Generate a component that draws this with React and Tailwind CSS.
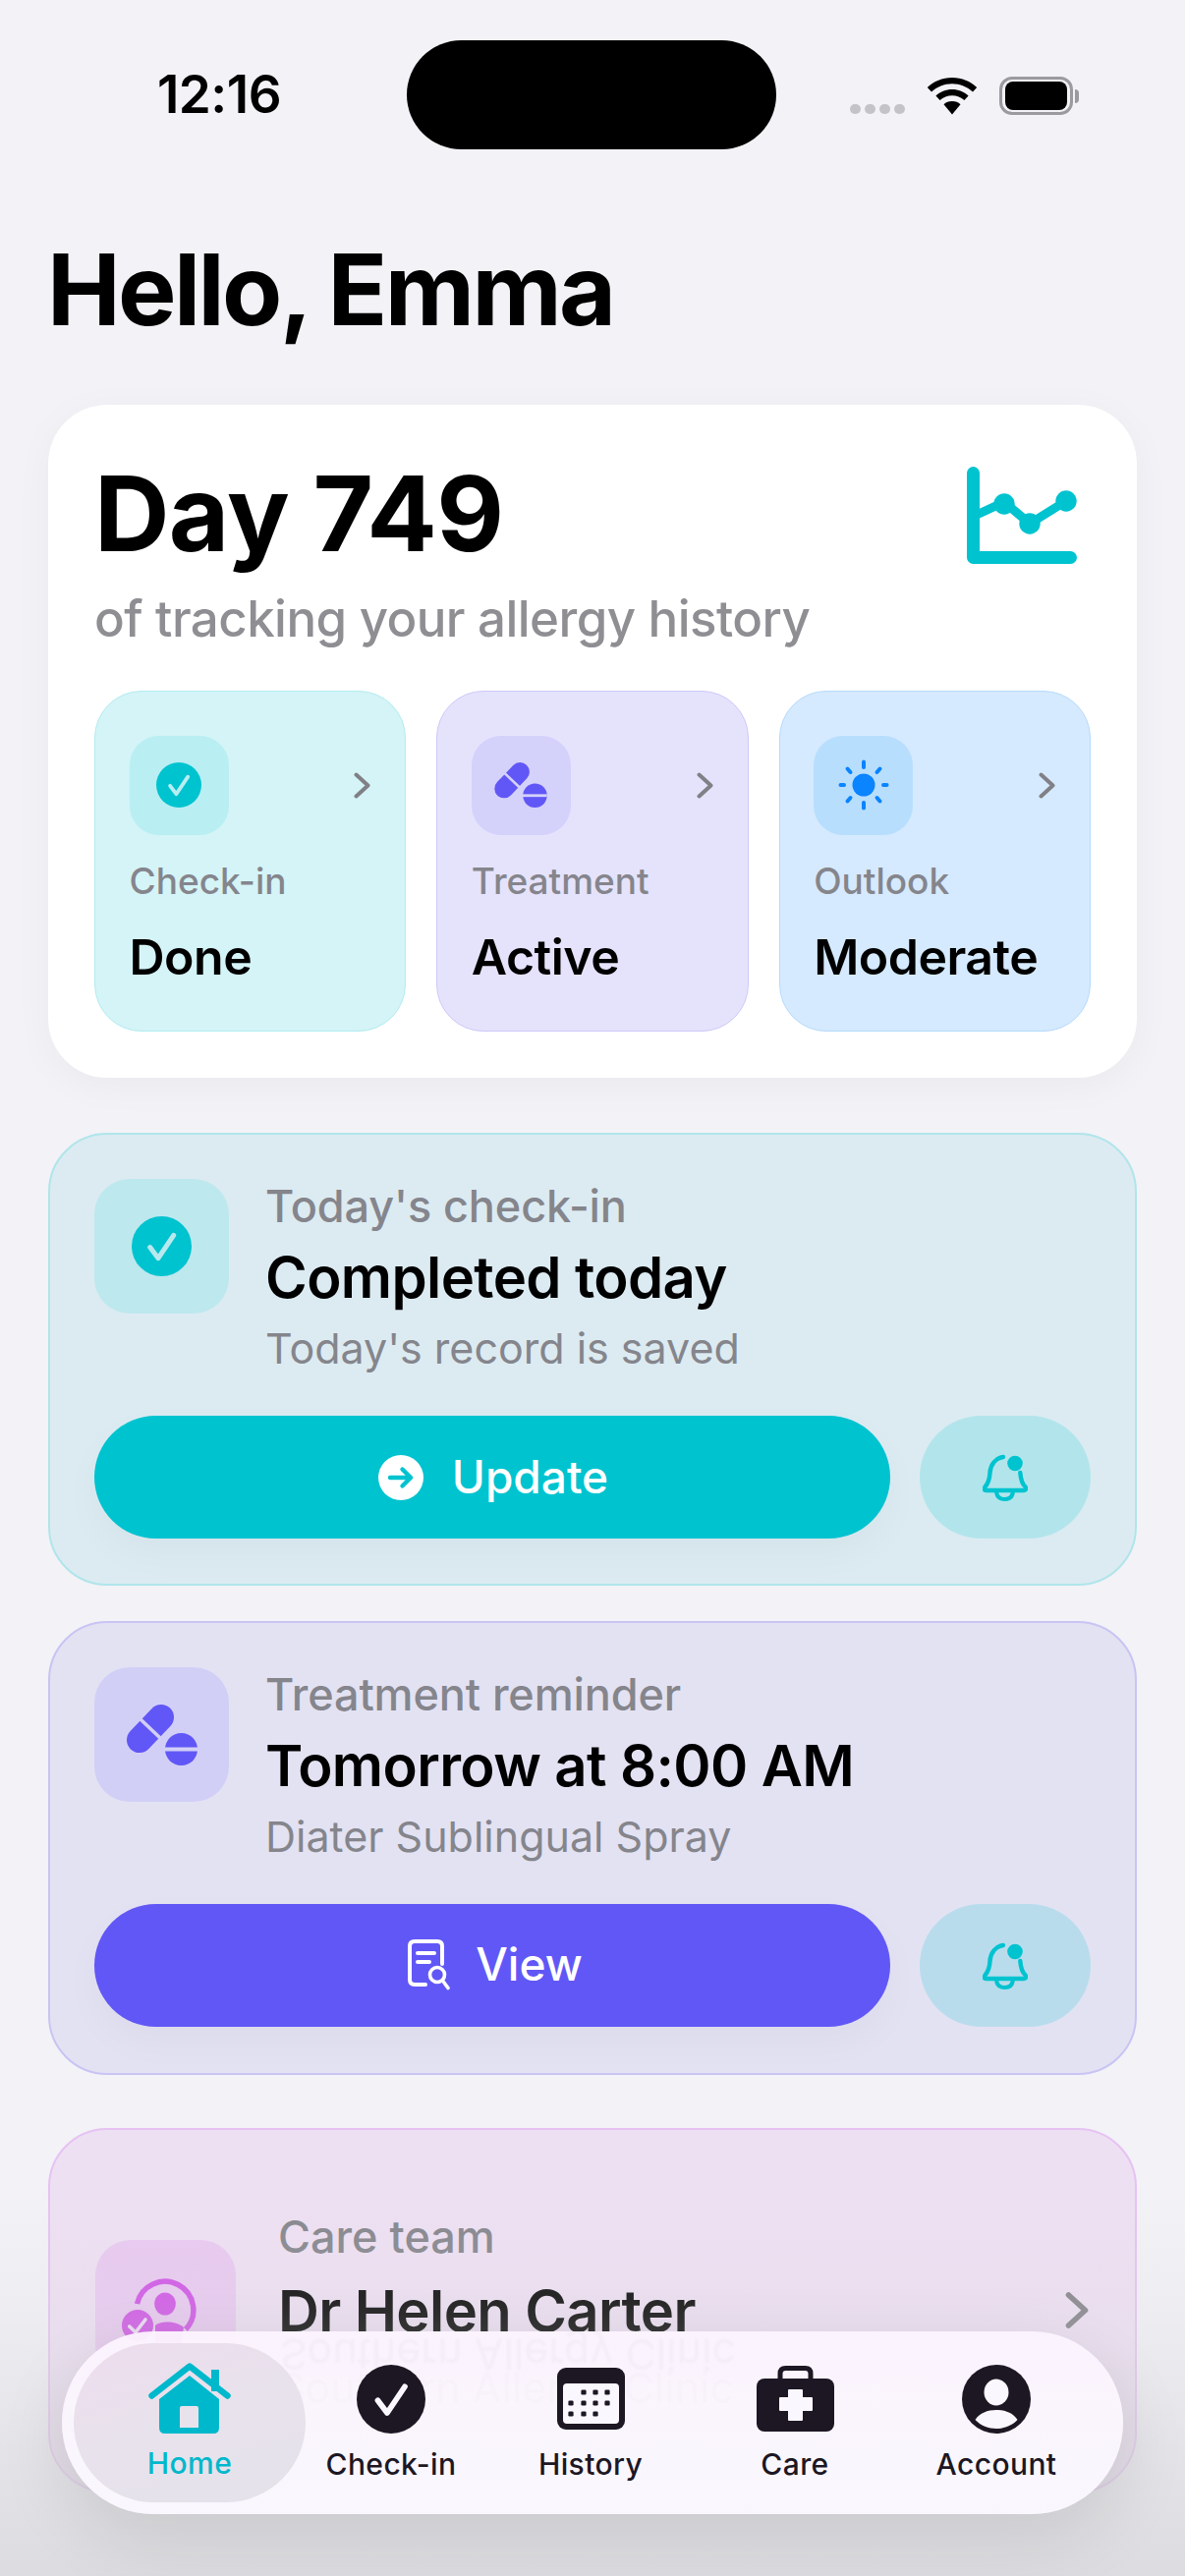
import React from "react";

const Check = ({ size = 44, bg = "#00c3d0", fg = "#b8e9ee" }) => (
  <svg width={size} height={size} viewBox="0 0 44 44">
    <circle cx="22" cy="22" r="22" fill={bg} />
    <path d="M13.500 22.800 L19.500 30.800 L30.800 14" fill="none" stroke={fg} strokeWidth="3.600" strokeLinecap="round" strokeLinejoin="round" />
  </svg>
);

const Pills = ({ w = 72, h = 62, cut = "#d2cff6" }) => (
  <svg width={w} height={h} viewBox="0 0 72 62">
    <path d="M35 13 L13 36" fill="none" stroke="#6157f6" strokeWidth="26" strokeLinecap="round" />
    <path d="M4 5.500 L44 43.500" fill="none" stroke={cut} strokeWidth="3.600" />
    <circle cx="55.500" cy="45.500" r="16.500" fill="#6157f6" />
    <path d="M38 45.500 H72" stroke={cut} strokeWidth="3.800" />
  </svg>
);

const Sun = () => (
  <svg width="52" height="52" viewBox="0 0 52 52">
    <circle cx="26" cy="26" r="11.500" fill="#0a84ff" />
    <g stroke="#0a84ff" strokeWidth="4" strokeLinecap="round">
      <path d="M26 2.500V8" />
      <path d="M26 44V49.500" />
      <path d="M2.500 26H6" />
      <path d="M46 26H49.500" />
      <path d="M9.500 9.500L12.500 13" />
      <path d="M42.500 9.500L39.500 13" />
      <path d="M9.500 42.500L12.500 39" />
      <path d="M42.500 42.500L39.500 39" />
    </g>
  </svg>
);

const Chevron = ({ w = 17, h = 27, c = "#808086" }) => (
  <svg width={w} height={h} viewBox="0 0 17 27">
    <path d="M2.500 2.500 L14.500 13.500 L2.500 24.500" fill="none" stroke={c} strokeWidth="4" strokeLinecap="round" strokeLinejoin="round" />
  </svg>
);

const Bell = () => (
  <svg width="46" height="48" viewBox="0 0 46 48" fill="none">
    <path d="M21 3 C13 4 8 11 7.500 19 C7.200 25 6.500 29 2.500 33.500 C1 35.600 1.600 37 3.500 37 H42 C44 37 45 35.500 43.600 33.500 C39.800 30 38.800 26 38.300 19" stroke="#00c3d0" strokeWidth="4.400" strokeLinecap="round" />
    <path d="M14 38 C14.500 43.500 18 46 22.500 46 C27 46 30.500 43.500 31 38" stroke="#00c3d0" strokeWidth="4" />
    <circle cx="33" cy="9.500" r="7.800" fill="#00c3d0" />
  </svg>
);

const ArrowCircle = () => (
  <svg width="46" height="46" viewBox="0 0 46 46">
    <circle cx="23" cy="23" r="23" fill="#fff" />
    <path d="M12 23H33M24.500 14.500L33 23L24.500 31.500" fill="none" stroke="#00c3d0" strokeWidth="4.400" strokeLinecap="round" strokeLinejoin="round" />
  </svg>
);

const DocSearch = () => (
  <svg width="44" height="52" viewBox="0 0 44 52" fill="none">
    <path d="M18 46 H7 C3.500 46 2 44.500 2 41 V7 C2 3.500 3.500 2 7 2 H30 C33.500 2 35 3.500 35 7 V25" stroke="#fff" strokeWidth="4" strokeLinecap="round" />
    <path d="M10 14H27M10 23H22" stroke="#fff" strokeWidth="4" strokeLinecap="round" />
    <circle cx="30" cy="36" r="7.500" stroke="#fff" strokeWidth="3.600" />
    <path d="M35.500 42L41 49.500" stroke="#fff" strokeWidth="3.600" strokeLinecap="round" />
  </svg>
);

const ChartIcon = () => (
  <svg width="112" height="99" viewBox="0 0 112 99" fill="none">
    <path d="M10 49L38 36L64 58L101 35" stroke="#00c3d0" strokeWidth="9" />
    <path d="M6.500 6.500V92.500H105.500" stroke="#00c3d0" strokeWidth="13" strokeLinecap="round" strokeLinejoin="round" />
    <circle cx="38" cy="38" r="10.700" fill="#00c3d0" />
    <circle cx="64" cy="58" r="10.700" fill="#00c3d0" />
    <circle cx="101" cy="35" r="10.700" fill="#00c3d0" />
  </svg>
);

const CareIcon = () => (
  <svg width="89" height="70" viewBox="0 0 89 70" fill="none">
    <path d="M15.500 28 A29 29 0 1 1 65 54" stroke="#d051e6" strokeWidth="5.500" />
    <ellipse cx="44" cy="28" rx="10.800" ry="11.500" fill="#d051e6" />
    <path d="M34 50 C38 46 54 44 63 52 L60 70 L34 70Z" fill="#d051e6" />
    <circle cx="16" cy="50" r="18" fill="#e6c9ed" />
    <circle cx="16" cy="50" r="16" fill="#d051e6" />
    <path d="M7.700 51L14 57L24 44" stroke="#eedcf5" strokeWidth="3.600" strokeLinecap="round" strokeLinejoin="round" />
  </svg>
);

const HomeIcon = () => (
  <svg width="84" height="73" viewBox="112 39 84 73">
    <path d="M176 46h8v22h-8z" fill="#00b8cc" />
    <path d="M115.500 72.500 L154 42.500 L192.500 72.500" fill="none" stroke="#00b8cc" strokeWidth="6.500" strokeLinecap="round" strokeLinejoin="round" />
    <path fillRule="evenodd" d="M154 52 L184 76 V105 Q184 111 178 111 H129 Q123 111 123 105 V76 Z M146 83 Q144 83 144 85 V105 H163 V85 Q163 83 161 83 Z" fill="#00b8cc" />
  </svg>
);

const CalIcon = () => (
  <svg width="69" height="63" viewBox="0 0 69 63">
    <rect width="69" height="63" rx="9" fill="#1c1723" />
    <rect x="6" y="16" width="57" height="41" rx="4" fill="#fbf7fe" />
    <g fill="#1c1723">
      {[[27, 25], [39, 25], [51, 25], [14, 36], [27, 36], [39, 36], [51, 36], [14, 47], [27, 47], [39, 47]].map(([x, y]) => (
        <rect key={x + "-" + y} x={x - 2.600} y={y - 2.600} width="5.200" height="5.200" rx="1.300" />
      ))}
    </g>
  </svg>
);

const BagIcon = () => (
  <svg width="79" height="67" viewBox="0 0 79 67">
    <path d="M24 15V8C24 4.500 26 2.500 29.500 2.500H49.500C53 2.500 55 4.500 55 8V15" fill="none" stroke="#1c1723" strokeWidth="5" />
    <rect y="13" width="79" height="54" rx="8" fill="#1c1723" />
    <path d="M33 25H46V33H56V45H46V55H33V45H24V33H33Z" fill="#fbf7fe" stroke="#fbf7fe" strokeWidth="2" strokeLinejoin="round" />
  </svg>
);

const UserIcon = () => (
  <svg width="70" height="70" viewBox="0 0 70 70">
    <circle cx="35" cy="35" r="35" fill="#1c1723" />
    <ellipse cx="35" cy="28" rx="12.500" ry="13.500" fill="#fbf7fe" />
    <path d="M13.500 56 C18 49 26 46 35 46 C44 46 52 49 56.500 56 C51 62 43 65 35 65 C27 65 19 62 13.500 56Z" fill="#fbf7fe" />
  </svg>
);

const Tile = ({ bg, border, box, icon, label, value }) => (
  <div className={`flex h-[347px] flex-col rounded-[48px] border-[1.5px] pl-[34.5px] pr-[35px] pt-[44.5px] ${bg} ${border}`}>
    <div className="flex items-center justify-between">
      <div className={`flex size-[101px] items-center justify-center rounded-[30px] ${box}`}>{icon}</div>
      <Chevron />
    </div>
    <div className="mt-[25px] text-[37px] font-medium leading-[44px] text-[#85858c]">{label}</div>
    <div className="mt-[24px] whitespace-nowrap text-[50px] font-semibold leading-[62px] tracking-[-0.5px] text-black">{value}</div>
  </div>
);

const Row = ({ boxClass, icon, label, title, sub }) => (
  <div className="flex gap-[37px]">
    <div className={`flex size-[137px] shrink-0 items-center justify-center rounded-[36px] ${boxClass}`}>{icon}</div>
    <div className="flex flex-col">
      <div className="text-[45px] font-medium leading-[56px] tracking-[-0.1px] text-[#85858c]">{label}</div>
      <div className="mt-[8px] text-[58px] font-semibold leading-[72px] tracking-[-0.6px] text-black">{title}</div>
      <div className="mt-[8px] text-[43px] leading-[56px] text-[#85858c]">{sub}</div>
    </div>
  </div>
);

const NavItem = ({ w, icon, label, color = "text-[#1c1723]" }) => (
  <div className={`flex flex-col items-center ${w}`}>
    <div className="flex h-[72px] items-center">{icon}</div>
    <div className={`mt-[11px] text-[30px] font-medium leading-[38px] tracking-[0.4px] ${color}`}>{label}</div>
  </div>
);

export default function App() {
  return (
    <div className="relative h-[2622px] w-[1206px] overflow-hidden bg-[#f2f2f7] font-[Inter,sans-serif]">
      {/* status bar */}
      <div className="flex h-[152px] items-start pt-[41px]">
        <div className="flex h-[111px] w-[414px] items-center justify-center pl-[32px] text-[53px] font-semibold tracking-[-0.5px] text-black">12:16</div>
        <div className="h-[111px] w-[376px] rounded-full bg-black" />
        <div className="flex items-center pl-[75px] pt-[37px]">
          <div className="flex gap-[4px] self-end pb-[1px]">
            {[0, 1, 2, 3].map((i) => (
              <div key={i} className="h-[10px] w-[11px] rounded-full bg-[#c4c4c8]" />
            ))}
          </div>
          <svg className="ml-[22px]" width="52" height="38" viewBox="0 0 52 38">
            <path fill="#000" d="M26 0C16 0 7.500 3.800 0.800 10L5 14.600C10.500 9.500 18 6.300 26 6.300S41.500 9.500 47 14.600L51.200 10C44.500 3.800 36 0 26 0Z" />
            <path fill="#000" d="M26 12C19.500 12 13.800 14.500 9.400 18.400L13.600 23C17 20 21.300 18.200 26 18.200S35 20 38.400 23L42.600 18.400C38.200 14.500 32.500 12 26 12Z" />
            <path fill="#000" d="M26 24C22.500 24 19.700 25.200 17.500 27.200L26 37.500L34.500 27.200C32.300 25.200 29.500 24 26 24Z" />
          </svg>
          <div className="ml-[22px] flex items-center">
            <div className="flex h-[39px] w-[75px] items-center justify-center rounded-[13px] border-[3px] border-[#9b9b9f]">
              <div className="h-[29px] w-[63px] rounded-[8px] bg-black" />
            </div>
            <div className="ml-[2px] h-[14px] w-[4px] rounded-r-full bg-[#9b9b9f]" />
          </div>
        </div>
      </div>

      <h1 className="mt-[83px] pl-[48px] text-[100px] font-bold leading-[120px] tracking-[-2.6px] text-black">Hello, Emma</h1>

      {/* summary card */}
      <div className="mx-[49px] mt-[57px] h-[685px] rounded-[60px] bg-white px-[47px] pt-[51px] shadow-[0_8px_40px_rgba(0,0,0,0.04)]">
        <div className="flex items-start justify-between pr-[14px]">
          <div className="text-[106px] font-bold leading-[120px] tracking-[-0.7px] text-black">Day 749</div>
          <div className="pt-[12px]"><ChartIcon /></div>
        </div>
        <div className="mt-[15px] text-[51px] font-medium leading-[64px] tracking-[-0.55px] text-[#8e8e93]">of tracking your allergy history</div>
        <div className="mt-[41px] grid grid-cols-3 gap-[31px]">
          <Tile bg="bg-[#d4f4f7]" border="border-[#b3ecf0]" box="bg-[#b9eef2]" icon={<Check size={46} fg="#b8eef2" />} label="Check-in" value="Done" />
          <Tile bg="bg-[#e5e3fc]" border="border-[#cdc9f8]" box="bg-[#d4d1fb]" icon={<Pills w={54} h={46} cut="#d4d1fb" />} label="Treatment" value="Active" />
          <Tile bg="bg-[#d5eafe]" border="border-[#b6dafc]" box="bg-[#b8defe]" icon={<Sun />} label="Outlook" value="Moderate" />
        </div>
      </div>

      {/* check-in card */}
      <div className="mx-[49px] mt-[56px] h-[461px] rounded-[60px] border-2 border-[#b0e5ea] bg-[#dcebf2] px-[45px] pt-[45px]">
        <Row boxClass="bg-[#bde8ee]" icon={<Check size={61} />} label="Today's check-in" title="Completed today" sub="Today's record is saved" />
        <div className="mt-[41px] flex gap-[30px]">
          <div className="flex h-[125px] w-[810px] items-center justify-center gap-[29px] rounded-full bg-[#00c3d0] pl-[2px] text-[46px] font-medium text-white shadow-[0_16px_40px_rgba(0,0,0,0.03)]">
            <ArrowCircle />
            <span>Update</span>
          </div>
          <div className="flex h-[125px] w-[174px] items-center justify-center rounded-full bg-[#b2e5eb]"><Bell /></div>
        </div>
      </div>

      {/* treatment card */}
      <div className="mx-[49px] mt-[36px] h-[462px] rounded-[60px] border-2 border-[#c8c4f3] bg-[#e3e2f3] px-[45px] pt-[45px]">
        <Row boxClass="bg-[#d2cff6]" icon={<Pills />} label="Treatment reminder" title="Tomorrow at 8:00 AM" sub="Diater Sublingual Spray" />
        <div className="mt-[41px] flex gap-[30px]">
          <div className="flex h-[125px] w-[810px] items-center justify-center gap-[25px] rounded-full bg-[#6157f6] pb-[2px] pl-[6px] text-[46px] font-medium text-white shadow-[0_16px_40px_rgba(0,0,0,0.03)]">
            <DocSearch />
            <span>View</span>
          </div>
          <div className="flex h-[125px] w-[174px] items-center justify-center rounded-full bg-[#b9dcec]"><Bell /></div>
        </div>
      </div>

      {/* care card */}
      <div className="mx-[49px] mt-[54px] flex h-[371px] items-center rounded-[60px] border-2 border-[#e6c2f2] bg-[#eee0f3] pl-[46px] pr-[47px]">
        <div className="flex size-[143px] shrink-0 items-center justify-center rounded-[36px] bg-[#e9c9f1]"><CareIcon /></div>
        <div className="ml-[43px] flex grow flex-col pt-[4px]">
          <div className="text-[45px] font-medium leading-[56px] text-[#85858c]">Care team</div>
          <div className="mt-[11px] text-[58px] font-semibold leading-[72px] tracking-[-0.6px] text-black">Dr Helen Carter</div>
          <div className="mt-[14px] text-[43px] leading-[56px] text-[#85858c]">Southern Allergy Clinic</div>
        </div>
        <Chevron w={24} h={39} />
      </div>

      {/* bottom fade */}
      <div className="pointer-events-none absolute inset-x-0 bottom-0 h-[400px] bg-[linear-gradient(to_bottom,rgba(216,216,220,0)_0%,rgba(216,216,220,0.2)_32%,rgba(216,216,220,0.85)_100%)]" />

      {/* tab bar */}
      <div className="absolute left-[63px] top-[2373px] flex h-[186px] w-[1080px] items-center overflow-hidden rounded-full bg-[linear-gradient(to_bottom,rgba(252,244,254,0.95),rgba(250,248,254,0.97))] px-[12px] shadow-[0_24px_70px_rgba(0,0,0,0.1)]">
        <div className="pointer-events-none absolute left-[222px] top-[2px] -scale-y-100 whitespace-nowrap text-[43px] leading-[44px] text-[#85858c] opacity-[0.05] blur-[1px]">Southern Allergy Clinic</div>
        <div className="relative flex h-[162px] w-[236px] flex-col items-center justify-center rounded-full bg-[linear-gradient(160deg,#eedcee_0%,#e8e2ec_45%,#e4e2ea_100%)] pb-[1px]">
          <div className="flex h-[72px] items-center"><HomeIcon /></div>
          <div className="mt-[11px] text-[30px] font-medium leading-[38px] tracking-[0.4px] text-[#00b8cc]">Home</div>
        </div>
        <NavItem w="w-[174px]" icon={<Check size={70} bg="#1c1723" fg="#fbf7fe" />} label="Check-in" />
        <NavItem w="w-[232px]" icon={<CalIcon />} label="History" />
        <NavItem w="w-[184px]" icon={<BagIcon />} label="Care" />
        <NavItem w="w-[226px]" icon={<UserIcon />} label="Account" />
      </div>
    </div>
  );
}
